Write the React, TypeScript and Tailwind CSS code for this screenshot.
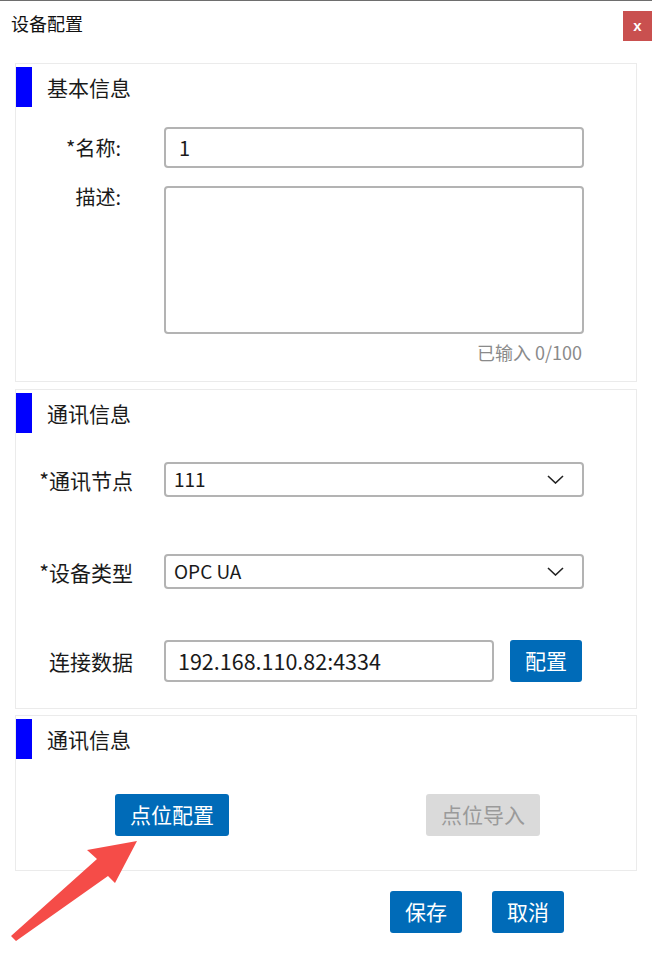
import React from "react";

const font = { fontFamily: '"Noto Sans CJK SC", "Noto Sans", sans-serif' };

function SectionHeader({ title }: { title: string }) {
  return (
    <div className="mt-[3px] h-[40px] flex items-center">
      <div className="w-[16px] self-stretch bg-[#0000ff]" />
      <span className="ml-[15px] text-[21px] leading-[28px] text-[#1a1a1a]">{title}</span>
    </div>
  );
}

function Chevron() {
  return (
    <svg width="17" height="9" viewBox="0 0 17 9" fill="none">
      <path d="M1 1 L8.5 8 L16 1" stroke="#222" strokeWidth="1.6" strokeLinejoin="miter" />
    </svg>
  );
}

function BlueBtn({ children, className }: { children: React.ReactNode; className?: string }) {
  return (
    <div
      className={
        "h-[42px] rounded-[3px] bg-[#006bb8] text-white text-[21px] flex items-center justify-center " +
        (className ?? "")
      }
    >
      {children}
    </div>
  );
}

export default function App() {
  return (
    <div className="relative w-[652px] h-[963px] bg-white overflow-hidden text-[#1a1a1a]" style={font}>
      {/* header */}
      <div className="border-t border-[#6e6e6e] h-[63px] flex justify-between items-start">
        <div className="pl-[11px] pt-[10px] text-[18px] leading-[24px] text-[#111]">设备配置</div>
        <div
          className="mt-[10px] w-[29px] h-[30px] bg-[#c9504f] text-white flex items-center justify-center text-[15px] font-bold leading-none pb-[2px]"
          style={{ fontFamily: '"Liberation Sans", sans-serif' }}
        >
          x
        </div>
      </div>

      {/* section 1 */}
      <div className="mx-[15px] border border-[#ebebeb] pb-[18px]">
        <SectionHeader title="基本信息" />
        <div className="mt-[20px] flex items-center">
          <div className="w-[105px] text-right text-[20px] leading-[26px]">*名称:</div>
          <div className="ml-[43px] w-[420px] h-[41px] border-2 border-[#b3b3b3] rounded-[4px] flex items-center pl-[13px] text-[20px]">
            1
          </div>
        </div>
        <div className="mt-[18px] flex items-start">
          <div className="w-[105px] text-right text-[20px] leading-[26px] -mt-[2px]">描述:</div>
          <div className="ml-[43px] w-[420px] h-[148px] border-2 border-[#b3b3b3] rounded-[4px]" />
        </div>
        <div className="mt-[7px] pr-[54px] text-right text-[18px] leading-[22px] text-[#8a8a8a]">已输入 0/100</div>
      </div>

      {/* section 2 */}
      <div className="mt-[7px] mx-[15px] border border-[#ebebeb] pb-[26px]">
        <SectionHeader title="通讯信息" />
        <div className="mt-[29px] flex items-center">
          <div className="w-[117px] text-right text-[21px] leading-[28px]">*通讯节点</div>
          <div className="ml-[31px] w-[420px] h-[35px] border-2 border-[#b3b3b3] rounded-[4px] flex items-center justify-between pl-[8px] pr-[18px] text-[19px]">
            <span>111</span>
            <Chevron />
          </div>
        </div>
        <div className="mt-[57px] flex items-center">
          <div className="w-[117px] text-right text-[21px] leading-[28px]">*设备类型</div>
          <div className="ml-[31px] w-[420px] h-[35px] border-2 border-[#b3b3b3] rounded-[4px] flex items-center justify-between pl-[8px] pr-[18px] text-[19px]">
            <span>OPC UA</span>
            <Chevron />
          </div>
        </div>
        <div className="mt-[51px] flex items-center">
          <div className="w-[117px] text-right text-[21px] leading-[28px]">连接数据</div>
          <div className="ml-[31px] w-[330px] h-[42px] border-2 border-[#b3b3b3] rounded-[4px] flex items-center pl-[12px] text-[21.5px]">
            192.168.110.82:4334
          </div>
          <BlueBtn className="ml-[16px] w-[72px]">配置</BlueBtn>
        </div>
      </div>

      {/* section 3 */}
      <div className="mt-[6px] mx-[15px] border border-[#ebebeb] pb-[34px]">
        <SectionHeader title="通讯信息" />
        <div className="mt-[35px] flex items-center">
          <BlueBtn className="ml-[99px] w-[114px]">点位配置</BlueBtn>
          <div className="ml-[197px] w-[114px] h-[42px] rounded-[3px] bg-[#dadada] text-[#9a9a9a] text-[21px] flex items-center justify-center">
            点位导入
          </div>
        </div>
      </div>

      {/* footer */}
      <div className="mt-[20px] flex">
        <BlueBtn className="ml-[390px] w-[72px]">保存</BlueBtn>
        <BlueBtn className="ml-[30px] w-[72px]">取消</BlueBtn>
      </div>

      {/* annotation arrow */}
      <svg className="absolute left-0 top-0 pointer-events-none" width="652" height="963" viewBox="0 0 652 963">
        <polygon points="137,841 87,850 97,859 11,936 16,941 108,876 115,883" fill="#f54c48" />
      </svg>
    </div>
  );
}
